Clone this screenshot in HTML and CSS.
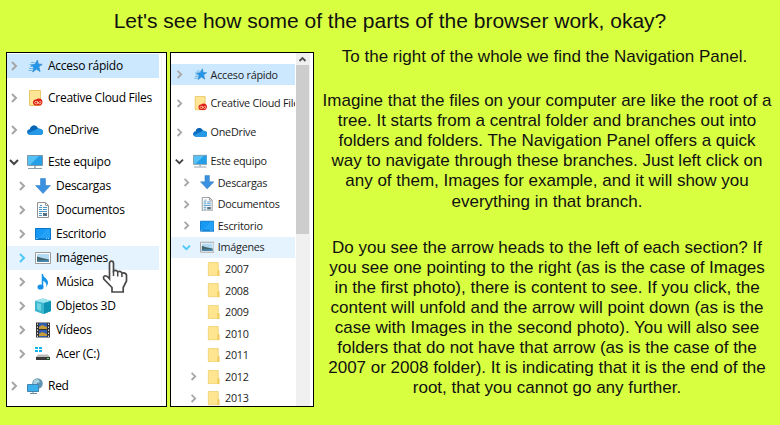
FILE: index.html
```
<!DOCTYPE html>
<html lang="en">
<head>
<meta charset="utf-8">
<title>Navigation Panel</title>
<link rel="stylesheet" href="styles.css">
</head>
<body>
<svg class="defs" aria-hidden="true">
  <symbol id="right" viewBox="0 0 8 12"><path d="M2 2l4 4-4 4" fill="none" stroke="currentColor" stroke-width="2"/></symbol>
  <symbol id="down" viewBox="0 0 12 12"><path d="M2 4l4 4 4-4" fill="none" stroke="currentColor" stroke-width="2"/></symbol>
  <symbol id="star" viewBox="0 0 16 16"><path d="M10.500 2l.7 4 4 .4-3.400 2.300 1.300 4.800-3.600-2.300L5.700 14l1-4.300L4 7l3.800-.7z" fill="#2196ea" stroke="#3a8fc9" stroke-width=".8"/><path d="M4 4.500h3.500M2.500 6.500H5M3 8.500h3M2 10.500h4M1.500 12.500h4" stroke="#5fb0e6" stroke-width=".9"/></symbol>
  <symbol id="cloudfolder" viewBox="0 0 16 16"><path d="M2.500.5h11V15.500h-11z" fill="#ffe596" stroke="#e6c25c" stroke-width=".9"/><path d="M6 12.500c0-2 1.500-3.200 3-3 2-1.800 6.500-1.500 6.500 2.500 0 2.500-1.500 3.500-3.500 3.500H8.500c-1.500 0-2.500-1.500-2.500-3z" fill="#de1f16"/><path d="M11.500 13.500c-1.500-2.500-3.800-2.500-3.800-1 0 2 2.500 1.800 3.300.5s3-2.500 3-.5-2 1.500-2.500.5l-1.500-2" fill="none" stroke="#ffd9b0" stroke-width=".8"/></symbol>
  <symbol id="onedrive" viewBox="0 0 16 16"><path d="M3.500 13C-1 13-1 7.500 3 7 4 3 9 1.800 11 6.500c3 0 5 1.300 5 3.500s-1.300 3-3 3z" fill="#0f70c4"/><path d="M3 7C4 3 9 1.800 11 6.500L8 9z" fill="#0864b4"/><path d="M1 11.500l10-5c3 0 5 1.300 5 3.500s-1.300 3-3 3H3.500z" fill="#2599e5"/></symbol>
  <symbol id="pc" viewBox="0 0 16 16"><path d="M.5 1.500h15v10H.5z" fill="#55c1f7" stroke="#8197a3"/><path d="M3 11l9-9h3v9z" fill="#249fe7"/><path d="M7 12h2v2H7z" fill="#aabac3"/><path d="M1 14.500h14" stroke="#8ba0ad"/></symbol>
  <symbol id="download" viewBox="0 0 16 16"><path d="M5.500.5h5v7H15.500L8 15.500.500 7.500h5z" fill="#3b91df" stroke="#2879c0" stroke-width=".5"/></symbol>
  <symbol id="doc" viewBox="0 0 16 16"><path d="M2.500.5h8l3 3v12h-11z" fill="#fbfbfb" stroke="#929292"/><path d="M10.500.5v3h3" fill="none" stroke="#999"/><path d="M5 3.500h2M4 5.500h3M4 7.500h3M8 5.500h4M8 7.500h4M4 9.500h8M4 11.500h3M4 13.500h3" stroke="#4b96c8"/><path d="M8 11h4v3H8z" fill="#557282"/></symbol>
  <symbol id="desktop" viewBox="0 0 16 16"><path d="M.5 2.500h15v11H.5z" fill="#1599f2" stroke="#0875c9"/><path d="M3 12L12 3h3v9z" fill="#31a8f6" opacity=".6"/><path d="M1 12.500h14" stroke="#0f80d0"/><path d="M1 12.500h1.500m8.500 0h1m1 0h1" stroke="#9bd4f8"/></symbol>
  <symbol id="image" viewBox="0 0 16 16"><path d="M.5 2.500h15v11H.5z" fill="#fff" stroke="#9b9b9b"/><path d="M2 4h12v8H2z" fill="#b4d9f3"/><path d="M2 6.500l5 1.500 7 1.500V12H2z" fill="#44656b"/><path d="M2 10.500l12-.5v2H2z" fill="#4688b4"/></symbol>
  <symbol id="music" viewBox="0 0 16 16"><path d="M7.500 0C8 3.500 13 4.500 13 8.500c0 1.800-1 3.300-2 4.500 1-3 0-5-3.500-6.500z" fill="#1694ec"/><path d="M7.500 0v13" stroke="#1694ec" stroke-width="1.500"/><ellipse cx="5.500" cy="13" rx="3" ry="2.600" fill="#1591ec"/></symbol>
  <symbol id="cube" viewBox="0 0 16 16"><path d="M0 3l8-2.500L16 3v10l-8 3-8-3z" fill="#3bb6cf"/><path d="M0 3l8-2.500L16 3 9 5z" fill="#9be5ee"/><path d="M9 5l7-2v10l-7 3z" fill="#0d93b3"/><path d="M2 5l4 1v7l-4-2z" fill="#72d5e3"/></symbol>
  <symbol id="video" viewBox="0 0 16 16"><path d="M1 .5h14v15H1z" fill="#333"/><path d="M4 1h8v6H4zm0 7h8v7H4z" fill="#315db0"/><path d="M4 5l3-2 5 2v2H4zm0 7l3-2 5 2v2H4z" fill="#c69c39"/><path d="M2.500 1.500v14m11-14v14" stroke="#ddd" stroke-dasharray="1.500 1.500"/></symbol>
  <symbol id="drive" viewBox="0 0 16 16"><path d="M0 1h3v2H0zm4 0h3v2H4zM0 4h3v2H0zm4 0h3v2H4z" fill="#10b4ef"/><path d="M3 8.500h10l2 2.500H1z" fill="#bbb"/><path d="M1 11h14v3H1z" fill="#3b3b3b"/><path d="M12 12.500h2" stroke="#4ff255"/></symbol>
  <symbol id="network" viewBox="0 0 16 16"><circle cx="10.500" cy="5.500" r="5.300" fill="#6197b2"/><path d="M7 2l4-1 2 3-3 1-1 3-3-2z" fill="#afd2df"/><path d="M.5 6.500h11v7H.5z" fill="#3ab1ed" stroke="#4483aa"/><path d="M6 14v1M3 15.500h7" stroke="#6b8f9f"/></symbol>
  <symbol id="folder" viewBox="0 0 16 16"><path d="M1.500.5h11v9h1v6h-12z" fill="#ffe58f" stroke="#edcb66" stroke-width=".8"/><path d="M11.500 15.500v-6h2v6z" fill="#f1cc5c"/></symbol>
</svg>
<main class="page">
  <h1 class="title">Let's see how some of the parts of the browser work, okay?</h1>
  <div class="content">
    <section class="panel first" lang="es">
      <div class="tree">
        <div class="row selected gap"><svg class="arrow"><use href="#right"/></svg><svg class="icon"><use href="#star"/></svg><span>Acceso rápido</span></div>
        <div class="row gap"><svg class="arrow"><use href="#right"/></svg><svg class="icon"><use href="#cloudfolder"/></svg><span>Creative Cloud Files</span></div>
        <div class="row gap"><svg class="arrow"><use href="#right"/></svg><svg class="icon"><use href="#onedrive"/></svg><span>OneDrive</span></div>
        <div class="row"><svg class="arrow open"><use href="#down"/></svg><svg class="icon"><use href="#pc"/></svg><span>Este equipo</span></div>
        <div class="row child"><svg class="arrow"><use href="#right"/></svg><svg class="icon"><use href="#download"/></svg><span>Descargas</span></div>
        <div class="row child"><svg class="arrow"><use href="#right"/></svg><svg class="icon"><use href="#doc"/></svg><span>Documentos</span></div>
        <div class="row child"><svg class="arrow"><use href="#right"/></svg><svg class="icon"><use href="#desktop"/></svg><span>Escritorio</span></div>
        <div class="row child hover"><svg class="arrow"><use href="#right"/></svg><svg class="icon"><use href="#image"/></svg><span>Imágenes</span></div>
        <div class="row child"><svg class="arrow"><use href="#right"/></svg><svg class="icon"><use href="#music"/></svg><span>Música</span></div>
        <div class="row child"><svg class="arrow"><use href="#right"/></svg><svg class="icon"><use href="#cube"/></svg><span>Objetos 3D</span></div>
        <div class="row child"><svg class="arrow"><use href="#right"/></svg><svg class="icon"><use href="#video"/></svg><span>Vídeos</span></div>
        <div class="row child gap"><svg class="arrow"><use href="#right"/></svg><svg class="icon"><use href="#drive"/></svg><span>Acer (C:)</span></div>
        <div class="row"><svg class="arrow"><use href="#right"/></svg><svg class="icon"><use href="#network"/></svg><span>Red</span></div>
      </div>
      <svg class="cursor" viewBox="0 0 26 34"><path d="M7.500 18V3.500Q7.500 1.200 9.500 1.200t2 2.300V11q3-1.500 4.200.8 3-1.300 4.200 1.200 3.800-.8 4.600 2v6l-3.300 6.500V32H10v-4.500L1.800 19q-1-2.500 1.200-3.200 2-.3 4.500 3z" fill="#fff" stroke="#484848" stroke-width="1.700"/><path d="M11.500 11v5m4.200-4v4.500m4.200-3.500v4" stroke="#484848" stroke-width="1.500"/></svg>
    </section>
    <section class="panel second" lang="es">
      <div class="tree">
        <div class="row selected gap"><svg class="arrow"><use href="#right"/></svg><svg class="icon"><use href="#star"/></svg><span>Acceso rápido</span></div>
        <div class="row gap"><svg class="arrow"><use href="#right"/></svg><svg class="icon"><use href="#cloudfolder"/></svg><span>Creative Cloud Files</span></div>
        <div class="row gap"><svg class="arrow"><use href="#right"/></svg><svg class="icon"><use href="#onedrive"/></svg><span>OneDrive</span></div>
        <div class="row"><svg class="arrow open"><use href="#down"/></svg><svg class="icon"><use href="#pc"/></svg><span>Este equipo</span></div>
        <div class="row child"><svg class="arrow"><use href="#right"/></svg><svg class="icon"><use href="#download"/></svg><span>Descargas</span></div>
        <div class="row child"><svg class="arrow"><use href="#right"/></svg><svg class="icon"><use href="#doc"/></svg><span>Documentos</span></div>
        <div class="row child"><svg class="arrow"><use href="#right"/></svg><svg class="icon"><use href="#desktop"/></svg><span>Escritorio</span></div>
        <div class="row child hover"><svg class="arrow open"><use href="#down"/></svg><svg class="icon"><use href="#image"/></svg><span>Imágenes</span></div>
        <div class="row leaf"><svg class="arrow"></svg><svg class="icon"><use href="#folder"/></svg><span>2007</span></div>
        <div class="row leaf"><svg class="arrow"></svg><svg class="icon"><use href="#folder"/></svg><span>2008</span></div>
        <div class="row leaf"><svg class="arrow"></svg><svg class="icon"><use href="#folder"/></svg><span>2009</span></div>
        <div class="row leaf"><svg class="arrow"></svg><svg class="icon"><use href="#folder"/></svg><span>2010</span></div>
        <div class="row leaf"><svg class="arrow"></svg><svg class="icon"><use href="#folder"/></svg><span>2011</span></div>
        <div class="row leaf"><svg class="arrow"><use href="#right"/></svg><svg class="icon"><use href="#folder"/></svg><span>2012</span></div>
        <div class="row leaf"><svg class="arrow"><use href="#right"/></svg><svg class="icon"><use href="#folder"/></svg><span>2013</span></div>
      </div>
      <div class="scrollbar"><svg class="up" viewBox="0 0 13 11"><path d="M3.500 7.500l3-3 3 3" fill="none" stroke="#505050" stroke-width="1.800"/></svg><div class="thumb"></div></div>
    </section>
    <article class="copy">
      <p class="lead">To the right of the whole we find the Navigation Panel.</p>
      <p>Imagine that the files on your computer are like the root of a<br>tree. It starts from a central folder and branches out into<br>folders and folders. The Navigation Panel offers a quick<br>way to navigate through these branches. Just left click on<br>any of them, Images for example, and it will show you<br>everything in that branch.</p>
      <p>Do you see the arrow heads to the left of each section? If<br>you see one pointing to the right (as is the case of Images<br>in the first photo), there is content to see. If you click, the<br>content will unfold and the arrow will point down (as is the<br>case with Images in the second photo). You will also see<br>folders that do not have that arrow (as is the case of the<br>2007 or 2008 folder). It is indicating that it is the end of the<br>root, that you cannot go any further.</p>
    </article>
  </div>
</main>
</body>
</html>
```

FILE: styles.css
```
* { box-sizing: border-box; }
body { margin: 0; background: #d9ff41; color: #111; font-family: "Liberation Sans", Arial, sans-serif; }
.defs { position: absolute; width: 0; height: 0; }
.page { height: 425px; overflow: hidden; }
.title { height: 52px; margin: 0; padding-top: 9px; font-size: 21px; line-height: 24px; font-weight: 400; text-align: center; }
.content { display: flex; height: 355px; padding-left: 6px; }
.panel { position: relative; flex: none; height: 355px; border: 1px solid #000; background: #fff; color: #000; font-family: "Open Sans", "Noto Sans", sans-serif; font-size: 12px; }
.first { width: 161px; padding-top: 1px; }
.first .tree { width: 155px; padding-right: 2px; border-right: 1px solid #f3f3f3; height: 352px; }
.second { display: flex; width: 144px; margin-left: 3px; }
.second .tree { zoom: .9; width: 138px; padding-top: 12px; height: 392px; overflow: hidden; color: #1c1c1c; }
.row { display: flex; align-items: center; height: 24px; padding-left: 1px; white-space: nowrap; }
.second .row { padding-left: 3px; }
.row.child { padding-left: 9px; }
.second .row.child { padding-left: 11px; }
.second .row.leaf { padding-left: 19px; }
.gap { margin-bottom: 8px; }
.row span { letter-spacing: -.27px; line-height: 20px; }
.arrow { flex: none; width: 12px; height: 12px; margin-right: 7px; color: #a6a6a6; }
.second .arrow { margin-right: 9px; }
.open { color: #444; }
.hover .arrow { color: #4bc8f6; }
.icon { flex: none; width: 16px; height: 16px; margin-right: 5px; }
.second .icon { margin-right: 4px; }
.selected { background: #cce8ff; }
.hover { background: #e5f3ff; }
.scrollbar { width: 14px; margin-left: 1px; height: 353px; background: #f0f0f0; }
.up { display: block; width: 13px; height: 12px; }
.thumb { width: 13px; height: 169px; background: #cdcdcd; }
.cursor { position: absolute; left: 95px; top: 207px; width: 26px; height: 34px; }
.copy { width: 467px; text-align: center; font-size: 17px; line-height: 20.1px; }
.copy p { margin: -5px 0 31px; white-space: nowrap; }
.copy .lead { margin-bottom: 29px; padding-right: 5px; }
```
